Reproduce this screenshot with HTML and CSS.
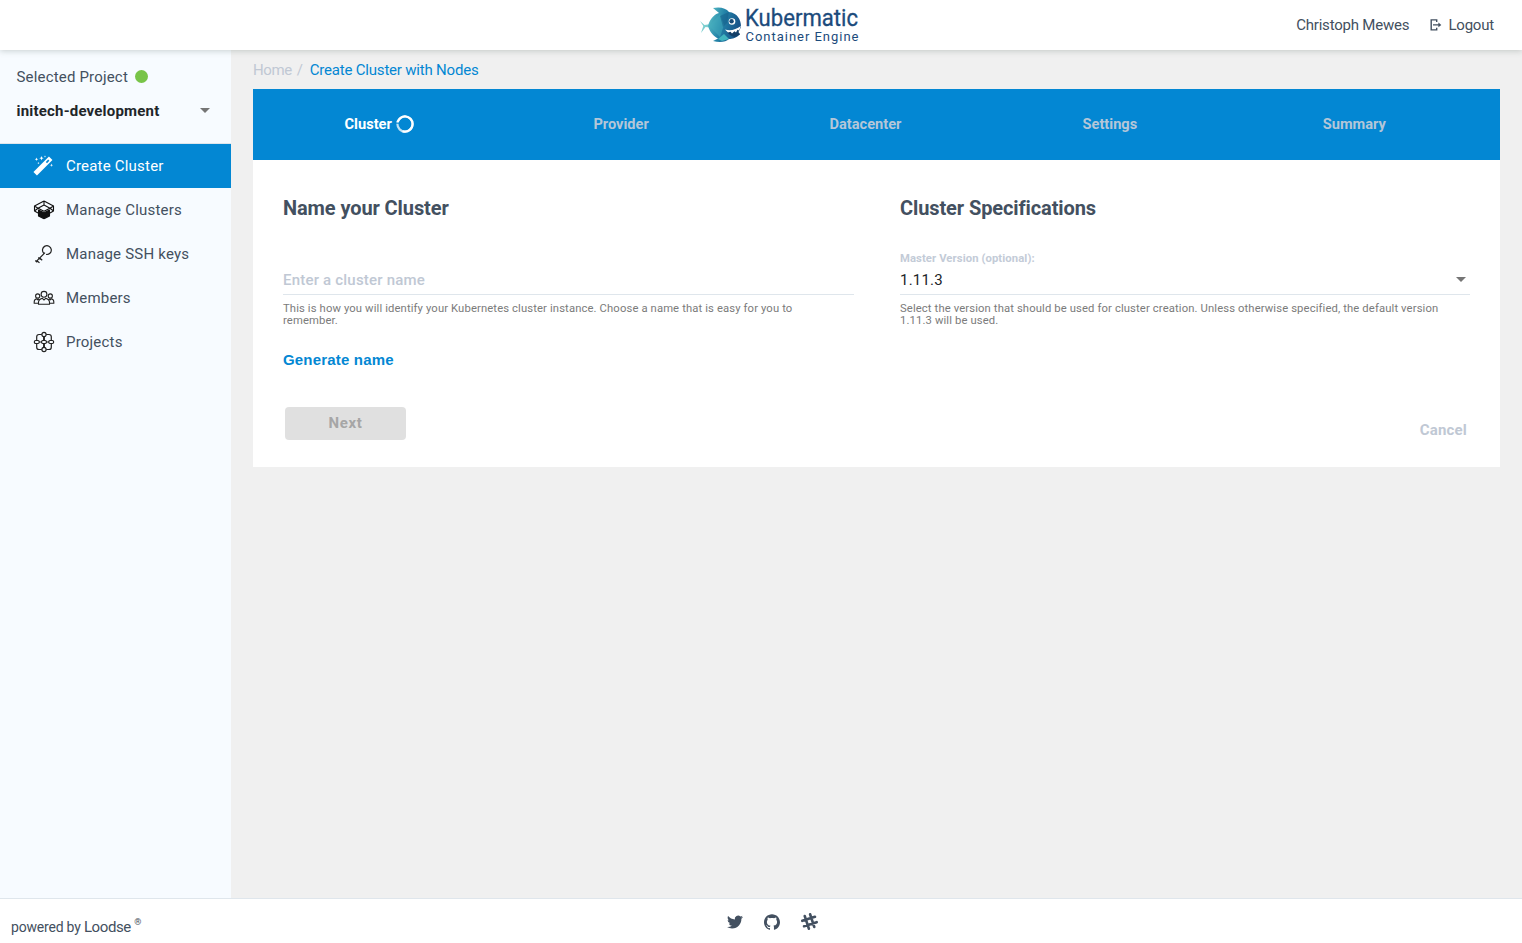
FILE: index.html
```html
<!DOCTYPE html>
<html lang="en">
<head>
<meta charset="utf-8">
<title>Kubermatic Container Engine</title>
<link rel="stylesheet" href="styles.css">
</head>
<body>
<div class="app">
  <header class="topbar">
    <svg class="logo" viewBox="0 0 160 45" width="160" height="45" role="img" aria-label="Kubermatic Container Engine">
      <defs>
        <linearGradient id="fish" x1="0" y1="0" x2="1" y2="0.3">
          <stop offset="0" stop-color="#62c8cb"/><stop offset="0.5" stop-color="#2383a8"/><stop offset="1" stop-color="#17548a"/>
        </linearGradient>
      </defs>
      <g transform="translate(0 3)">
      <path fill="#7dcfd0" d="M0 16 L4.500 20 L11 19 L17 14 L17 28 L10 22.500 L5.500 22 L1 28 L3.300 21 Z"/>
      <path fill="url(#fish)" d="M8 21 C10 13 15 9 19 8 L13 3 C20 1.500 26 3 29 7 C37 8 41 14 41 22 L37 27 L40 29 C37 33 32 34 29 34 C26 37 20 38 13 36 L18 33.500 C13 31 10 27 8 21Z"/>
      <path fill="#44aebd" d="M9 21 L20 9 L24 20 L20 32Z" opacity=".5"/>
      <path fill="#135b87" d="M20 11 L29 7 L27 18 L23 22Z" opacity=".5"/>
      <path fill="#41b5bf" d="M18 34 L24 29 L29 34 L22 36Z"/>
      <circle cx="32" cy="16.500" r="3.300" fill="#fff"/><circle cx="31.600" cy="16.300" r="2.200" fill="#174b76"/>
      <path fill="#123e68" d="M26 25 Q33 29 41 22 L38.500 27 L40 29.500 L35 32 Q29 31 26 25Z"/>
      <path fill="#fff" d="M25 24.500 Q33 26.800 41 21 L39 25.500 L37.500 24.800 L36 27.500 L34.500 26.300 L32 28.500 L30.500 26.700 L28 27.500Z"/>
      </g>
      <text class="logo-name" x="45" y="23.500" textLength="113" lengthAdjust="spacingAndGlyphs">Kubermatic</text>
      <text class="logo-sub" x="45.500" y="39" textLength="113">Container Engine</text>
    </svg>
    <nav class="account">
      <span class="user">Christoph Mewes</span>
      <a class="logout">
        <svg width="12" height="12" viewBox="0 0 12 12" fill="none" stroke="#435060" stroke-width="1.400"><path d="M6.700 3V.9H1.200v10h5.500V8.800M3 5.900h7"/><path d="M8.400 3.600 11.300 5.900 8.400 8.200z" fill="#435060" stroke="none"/></svg>
        <span>Logout</span>
      </a>
    </nav>
  </header>

  <div class="body">
    <aside class="sidebar">
      <div class="project-label">Selected Project <i class="status"></i></div>
      <div class="project-select"><span>initech-development</span><i class="caret"></i></div>
      <nav class="menu">
        <a class="item active">
          <svg viewBox="0 0 22 22" width="22" height="22"><path fill="none" stroke="#fff" stroke-width="5" d="M2.200 18.800 17.700 3.300"/><path stroke="#0387d3" stroke-width="1.700" d="m13.400 7.600 2.400-2.400"/><path fill="#fff" d="m8.500 1 .6 1.600 1.600.6-1.600.6-.6 1.600-.6-1.600-1.600-.6 1.600-.6zM3.500 2.500l.5 1.300 1.300.5L4 4.800l-.5 1.300L3 4.800l-1.300-.5L3 3.800zM18.500 8.500l.4 1.300 1.300.4-1.300.4-.4 1.300-.4-1.300-1.300-.4 1.300-.4zM12 .3l.3.9.9.3-.9.3-.3.9-.3-.9-.9-.3.9-.3zM5.400 7l.3.8.8.3-.8.3-.3.8-.3-.8-.8-.3.8-.3z"/></svg>
          <span>Create Cluster</span></a>
        <a class="item">
          <svg viewBox="0 0 22 22" width="22" height="22" fill="none" stroke="#111" stroke-width="1.100" stroke-linejoin="round"><path d="M11 2 1.500 7 5 9.200 1.500 12 5 14M11 2l9.500 5L17 9.200l3.500 2.800L17 14M1.500 7v5M20.500 7v5M5 9.200 11 6 17 9.200 11 12.300zM11 2v4"/><path fill="#111" d="M5.500 11 10.500 13.600v6L5.500 17zM16.500 11 11.500 13.600v6l5-2.600z"/></svg>
          <span>Manage Clusters</span></a>
        <a class="item">
          <svg viewBox="0 0 22 22" width="22" height="22" fill="none" stroke="#222" stroke-width="1.200"><path d="M10.800 10.200A4.400 4.400 0 1 1 13.100 11.400M12 9.700 2.800 18.900M4 17.700l2.500 2.200M6.700 15l2.500 2.200M2.300 17.500l2 1.800M5.300 14.500l2 1.800"/></svg>
          <span>Manage SSH keys</span></a>
        <a class="item">
          <svg viewBox="0 0 22 22" width="22" height="22" fill="none" stroke="#222" stroke-width="1.100"><circle cx="11" cy="7.300" r="2.900"/><circle cx="4.700" cy="9" r="2.100"/><circle cx="17.300" cy="9" r="2.100"/><path d="M5.500 17.300v-2c0-2.300 1.700-3.300 3.800-4l1.700 1.600 1.700-1.600c2.100.7 3.800 1.700 3.800 4v2zM5.500 16.300H1.200v-1.500c0-1.700 1-2.600 2.400-3l1.100 1 1.300-1M16.500 16.300h4.300v-1.500c0-1.700-1-2.600-2.400-3l-1.100 1-1.300-1"/></svg>
          <span>Members</span></a>
        <a class="item">
          <svg viewBox="0 0 22 22" width="22" height="22" fill="none" stroke="#222" stroke-width="1.200"><circle cx="11" cy="3.500" r="2.100"/><circle cx="11" cy="18.500" r="2.100"/><rect x="1.400" y="9.500" width="4.800" height="3" rx="1.200"/><rect x="8.600" y="9.500" width="4.800" height="3" rx="1.200"/><rect x="15.800" y="9.500" width="4.800" height="3" rx="1.200"/><path d="M8.800 3.500H6Q3.700 3.500 3.700 5.800v3.600M13.200 3.500H16q2.300 0 2.300 2.300v3.600M8.800 18.500H6q-2.300 0-2.300-2.300v-3.600M13.200 18.500H16q2.300 0 2.300-2.300v-3.600M8.700 11H6M13.300 11H16"/><path stroke-width="1.900" d="M11 5.700v3.700M11 12.600v3.700"/></svg>
          <span>Projects</span></a>
      </nav>
    </aside>

    <main class="content">
      <div class="crumbs"><span class="home">Home</span><span class="slash">/</span><span class="here">Create Cluster with Nodes</span></div>
      <section class="card">
        <ol class="steps">
          <li class="current">Cluster<svg width="20" height="20" viewBox="0 0 20 20" fill="none" stroke="#fff" stroke-width="2.200"><circle cx="10" cy="10" r="7.600" opacity=".75"/><path d="M2.600 8.300A7.600 7.600 0 0 1 17.600 10A7.600 7.600 0 0 1 7.500 17.200"/><path stroke="#0387d3" stroke-width="1" d="M.5 9.200h4"/></svg></li>
          <li>Provider</li><li>Datacenter</li><li>Settings</li><li>Summary</li>
        </ol>
        <div class="form">
          <div class="col">
            <h2>Name your Cluster</h2>
            <label class="float"></label>
            <div class="field placeholder">Enter a cluster name</div>
            <p class="hint">This is how you will identify your Kubernetes cluster instance. Choose a name that is easy for you to<br>remember.</p>
            <a class="generate">Generate name</a>
          </div>
          <div class="col">
            <h2>Cluster Specifications</h2>
            <label class="float">Master Version (optional):</label>
            <div class="field">1.11.3<i class="caret"></i></div>
            <p class="hint">Select the version that should be used for cluster creation. Unless otherwise specified, the default version<br>1.11.3 will be used.</p>
          </div>
        </div>
        <div class="actions"><button class="next" disabled>Next</button><a class="cancel">Cancel</a></div>
      </section>
    </main>
  </div>

  <footer class="footer">
    <div class="powered"><span>powered by</span> <span class="loodse">Loodse</span> <sup>®</sup></div>
    <div class="social">
      <svg width="16" height="16" viewBox="0 0 24 24" fill="#435060"><path d="M23.953 4.570a10 10 0 01-2.825.775 4.958 4.958 0 002.163-2.723c-.951.555-2.005.959-3.127 1.184a4.920 4.920 0 00-8.384 4.482C7.690 8.095 4.067 6.130 1.640 3.162a4.822 4.822 0 00-.666 2.475c0 1.710.870 3.213 2.188 4.096a4.904 4.904 0 01-2.228-.616v.060a4.923 4.923 0 003.946 4.827 4.996 4.996 0 01-2.212.085 4.936 4.936 0 004.604 3.417 9.867 9.867 0 01-6.102 2.105c-.390 0-.779-.023-1.170-.067a13.995 13.995 0 007.557 2.209c9.053 0 13.998-7.496 13.998-13.985 0-.210 0-.420-.015-.630A9.935 9.935 0 0024 4.590z"/></svg>
      <svg width="16" height="16" viewBox="0 0 24 24" fill="#435060"><path d="M12 .297c-6.630 0-12 5.373-12 12 0 5.303 3.438 9.800 8.205 11.385.600.113.820-.258.820-.577 0-.285-.010-1.040-.015-2.040-3.338.724-4.042-1.610-4.042-1.610C4.422 18.070 3.633 17.700 3.633 17.700c-1.087-.744.084-.729.084-.729 1.205.084 1.838 1.236 1.838 1.236 1.070 1.835 2.809 1.305 3.495.998.108-.776.417-1.305.760-1.605-2.665-.300-5.466-1.332-5.466-5.930 0-1.310.465-2.380 1.235-3.220-.135-.303-.540-1.523.105-3.176 0 0 1.005-.322 3.300 1.230.960-.267 1.980-.399 3-.405 1.020.006 2.040.138 3 .405 2.280-1.552 3.285-1.230 3.285-1.230.645 1.653.240 2.873.120 3.176.765.840 1.230 1.910 1.230 3.220 0 4.610-2.805 5.625-5.475 5.920.420.360.810 1.096.810 2.220 0 1.606-.015 2.896-.015 3.286 0 .315.210.690.825.570C20.565 22.092 24 17.592 24 12.297c0-6.627-5.373-12-12-12"/></svg>
      <svg width="17" height="17" viewBox="0 0 18 18" fill="none" stroke="#435060" stroke-width="2.800" stroke-linecap="round"><g transform="rotate(-18 9 9)"><path d="M6 2v14M12 2v14M2 6h14M2 12h14"/></g></svg>
    </div>
  </footer>
</div>
</body>
</html>
```
FILE: styles.css
```css
* { box-sizing: border-box; }
body { margin: 0; background: #f0f0f0; color: #435060; font-family: Roboto, sans-serif; font-size: 15px; }
.app { height: 943px; display: flex; flex-direction: column; overflow: hidden; }
svg { display: block; flex: none; }

.topbar { position: relative; z-index: 2; height: 50px; flex: none; background: #fff; display: grid; grid-template-columns: 1fr 160px 1fr; padding-left: 37px; box-shadow: 0 1px 6px rgba(90, 105, 100, .3); }
.logo { grid-column: 2; margin-top: 2px; overflow: visible; }
.logo-name { font: 400 23.500px Roboto, sans-serif; fill: #1c4b7c; stroke: #1c4b7c; stroke-width: .3px; }
.logo-sub { font: 400 13px Roboto, sans-serif; fill: #1c4b7c; }
.account { grid-column: 3; display: flex; justify-content: flex-end; align-items: center; padding-right: 28px; gap: 21px; font-size: 15px; letter-spacing: -.2px; }
.logout { display: flex; align-items: center; gap: 6px; }

.body { flex: 1; display: flex; min-height: 0; }
.sidebar { width: 231px; flex: none; background: #f7fbff; }
.project-label { display: flex; align-items: center; gap: 7px; height: 20px; margin: 16.500px 0 0 16.500px; letter-spacing: .18px; }
.status { width: 13px; height: 13px; border-radius: 50%; background: #78c448; }
.project-select { display: flex; align-items: center; justify-content: space-between; height: 20px; margin: 14px 21.500px 22.500px 16.500px; color: #212529; font-weight: 700; letter-spacing: .2px; }
.caret { width: 0; height: 0; border: 5.500px solid transparent; border-top: 5px solid #757575; border-bottom: 0; }
.menu { border-top: 1px solid #dfe6ec; }
.item { height: 44px; display: flex; align-items: center; gap: 11px; padding-left: 33px; letter-spacing: .2px; }
.item.active { background: #0387d3; color: #fff; }

.content { flex: 1; padding: 0 22px; }
.crumbs { height: 39px; display: flex; align-items: center; font-size: 15px; letter-spacing: -.2px; color: #c0c8d4; }
.home { letter-spacing: -.4px; }
.slash { margin: 0 7px 0 5px; }
.here { color: #0387d3; }
.card { background: #fff; height: 378px; }
.steps { list-style: none; margin: 0; padding: 0 13px 2px 2px; height: 71px; background: #0387d3; color: #b4c6d8; display: grid; grid-template-columns: repeat(5, 244.400px); font-weight: 700; font-size: 14.600px; }
.steps li { display: flex; align-items: center; justify-content: center; padding-right: 1px; }
.steps .current { color: #fff; gap: 3px; padding: 0 0 0 5px; }
.form { display: grid; grid-template-columns: 571px 570px; column-gap: 46px; padding: 35px 30px 0; height: 247px; }
h2 { margin: 0; height: 27px; line-height: 27px; font-size: 20px; font-weight: 700; letter-spacing: -.1px; }
.float { display: block; height: 14px; line-height: 16px; margin-top: 29px; font-size: 11.250px; font-weight: 700; color: #c3cbd7; letter-spacing: .1px; }
.field { height: 30px; border-bottom: 1px solid #dfe6ec; display: flex; align-items: center; justify-content: space-between; padding-right: 4px; color: #212529; letter-spacing: .2px; }
.placeholder { color: #c0c8d4; font-weight: 500; }
.hint { margin: 8px 0 0; font-size: 11.250px; line-height: 12px; color: #7b7b7b; white-space: nowrap; letter-spacing: .125px; }
.generate { display: block; margin-top: 24px; font: 700 15px/18px "Liberation Sans", sans-serif; color: #0387d3; letter-spacing: .18px; }
.actions { display: flex; justify-content: space-between; padding: 0 33px 0 32px; }
.next { width: 121px; height: 33px; border: 0; border-radius: 4px; background: #e0e0e0; color: #a6a6a6; padding: 0 0 2px; font: 700 15px Roboto, sans-serif; letter-spacing: .6px; }
.cancel { margin-top: 14px; color: #c0c8d4; font-weight: 700; letter-spacing: .2px; line-height: 18px; }

.footer { position: relative; z-index: 1; height: 45px; flex: none; border-top: 1px solid #dfe6ec; background: #fff; display: grid; grid-template-columns: 727px 1fr; }
.powered { padding: 18px 0 0 11px; font: 14px/20px Roboto, sans-serif; letter-spacing: -.2px; }
.loodse { font-size: 15px; letter-spacing: -.4px; }
.powered sup { font-size: 9px; line-height: 0; vertical-align: 7px; }
.social { display: flex; gap: 21px; padding-top: 15px; }
.social svg:last-child { margin-top: -1px; }
```
